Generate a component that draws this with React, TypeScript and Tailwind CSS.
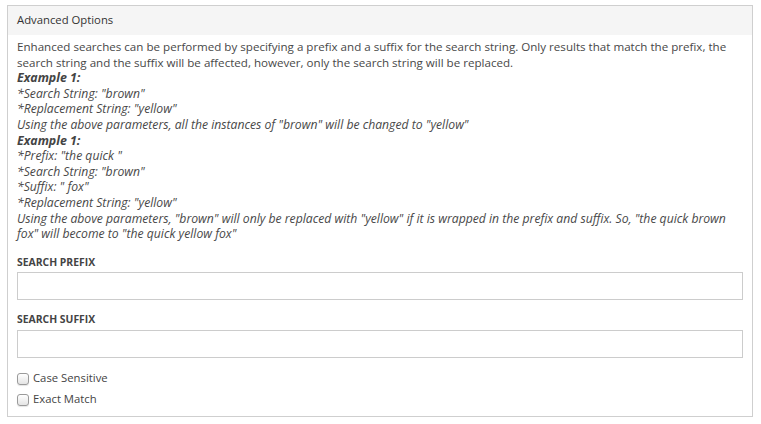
import React from "react";

const examples = [
  { bold: true, text: "Example 1:" },
  { text: '*Search String: "brown"' },
  { text: '*Replacement String: "yellow"' },
  { text: 'Using the above parameters, all the instances of "brown" will be changed to "yellow"' },
  { bold: true, text: "Example 1:" },
  { text: '*Prefix: "the quick "' },
  { text: '*Search String: "brown"' },
  { text: '*Suffix: " fox"' },
  { text: '*Replacement String: "yellow"' },
  {
    text: 'Using the above parameters, "brown" will only be replaced with "yellow" if it is wrapped in the prefix and suffix. So, "the quick brown fox" will become to "the quick yellow fox"',
  },
];

export default function App() {
  return (
    <div className="min-h-[424px] bg-white pt-[5px] pr-[8px] pl-[7px] font-['Open_Sans',sans-serif] text-[11.6px] text-[#484848]">
      <div className="border border-[#cfcfcf]">
        <div className="bg-[#f5f5f5] h-[29px] flex items-center px-[9px] text-[11.3px] text-[#333]">
          Advanced Options
        </div>
        <div className="px-[9px] pt-[4px] pb-[8px]">
          <div className="leading-[15.6px]">
            <p>
              Enhanced searches can be performed by specifying a prefix and a suffix for the search string. Only results that match the prefix, the search string and the suffix will be affected, however, only the search string will be replaced.
            </p>
            {examples.map((line, i) => (
              <p
                key={i}
                className={line.bold ? "italic font-bold text-[12.4px] text-[#444]" : "italic text-[12.2px]"}
              >
                {line.text}
              </p>
            ))}
          </div>

          <label className="block mt-[13px] mb-[2px] text-[10.4px] font-bold uppercase text-[#444]">
            Search Prefix
          </label>
          <input className="block w-full h-[28px] border border-[#cccccc] bg-white" />

          <label className="block mt-[12px] mb-[2px] text-[10.4px] font-bold uppercase text-[#444]">
            Search Suffix
          </label>
          <input className="block w-full h-[28px] border border-[#cccccc] bg-white" />

          <div className="mt-[13px] flex flex-col gap-[5px] text-[11.3px]">
            <label className="flex items-center gap-[4px] h-[16px] text-[#444]">
              <span className="w-[12px] h-[12px] rounded-[3px] border border-[#9a9a9a] bg-gradient-to-b from-white to-[#e4e4e4] shadow-[0_1px_1px_rgba(0,0,0,0.1)]" />
              Case Sensitive
            </label>
            <label className="flex items-center gap-[4px] h-[16px] text-[#444]">
              <span className="w-[12px] h-[12px] rounded-[3px] border border-[#9a9a9a] bg-gradient-to-b from-white to-[#e4e4e4] shadow-[0_1px_1px_rgba(0,0,0,0.1)]" />
              Exact Match
            </label>
          </div>
        </div>
      </div>
    </div>
  );
}
